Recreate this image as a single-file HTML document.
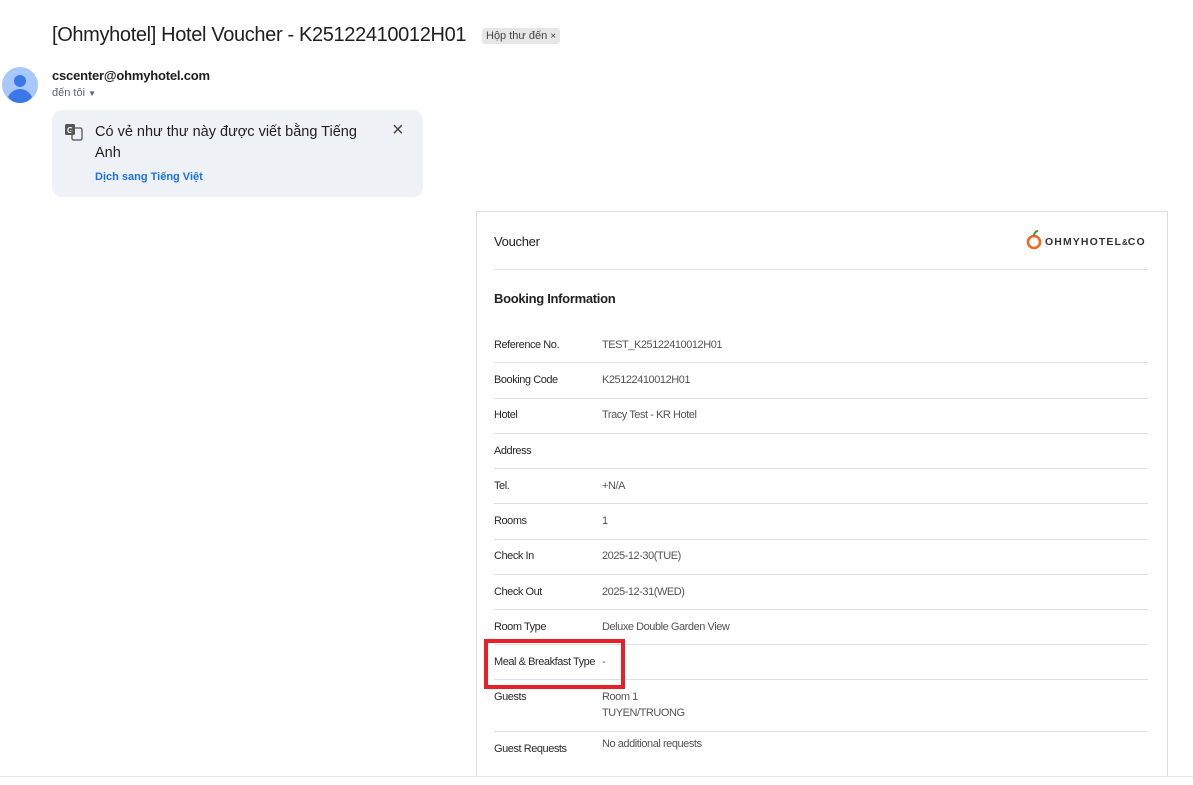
<!DOCTYPE html>
<html><head><meta charset="utf-8"><style>
*{margin:0;padding:0;box-sizing:border-box}
body{width:1193px;height:785px;background:#fff;font-family:"Liberation Sans",Arial,sans-serif;position:relative;overflow:hidden;color:#1f1f1f}
.a{position:absolute;white-space:nowrap}
.lbl{position:absolute;left:494px;font-size:11px;color:#2a2a2a;letter-spacing:-0.45px}
.val{position:absolute;left:602px;font-size:11px;color:#555;letter-spacing:-0.45px}
.ln{position:absolute;left:494px;width:654px;height:1px;background:#e0e0e0}
</style></head><body>
<div class="a" style="left:52px;top:24px;font-size:20px;letter-spacing:-0.35px;color:#1f1f1f">[Ohmyhotel] Hotel Voucher - K25122410012H01</div>
<div class="a" style="left:482px;top:28px;height:16px;padding:0 4px;background:#e6e6e6;border-radius:3px;font-size:11px;line-height:16px;color:#444">Hộp thư đến <span style="font-size:10px">×</span></div>
<svg class="a" style="left:2px;top:67px" width="36" height="36" viewBox="0 0 36 36"><circle cx="18" cy="18" r="18" fill="#a8c7fa"/><circle cx="18" cy="14" r="6" fill="#3b78e7"/><path d="M6 30c3-6 8-8 12-8s9 2 12 8c-3 4-7 6-12 6s-9-2-12-6z" fill="#3b78e7"/></svg>
<div class="a" style="left:52px;top:68px;font-size:13px;font-weight:bold;color:#1f1f1f;letter-spacing:-0.2px">cscenter@ohmyhotel.com</div>
<div class="a" style="left:52px;top:87px;font-size:11px;color:#5f6368">đến tôi <span style="font-size:8px">▼</span></div>
<div class="a" style="left:52px;top:110px;width:371px;height:87px;background:#eef1f6;border-radius:10px"></div>
<svg class="a" style="left:64px;top:123px" width="20" height="18" viewBox="0 0 20 18"><rect x="1" y="1" width="10" height="11" rx="1.5" fill="#555"/><text x="3" y="10" font-size="8" font-weight="bold" fill="#fff" font-family="Liberation Sans">G</text><rect x="8" y="5" width="10" height="12" rx="1.5" fill="none" stroke="#555" stroke-width="1.3"/></svg>
<div class="a" style="left:95px;top:122px;font-size:14.5px;line-height:21px;color:#1f1f1f;white-space:normal;width:280px">Có vẻ như thư này được viết bằng Tiếng Anh</div>
<div class="a" style="left:392px;top:119px;font-size:20px;color:#444">×</div>
<div class="a" style="left:95px;top:171px;font-size:11px;font-weight:bold;color:#1a73e8">Dịch sang Tiếng Việt</div>

<div class="a" style="left:476px;top:211px;width:692px;height:566px;border:1px solid #ddd;border-bottom:none"></div>
<div class="a" style="left:494px;top:234px;font-size:13px;color:#222;letter-spacing:-0.3px">Voucher</div>
<svg class="a" style="left:1026px;top:229px" width="16" height="22" viewBox="0 0 16 22"><circle cx="8" cy="13" r="6" fill="none" stroke="#f26522" stroke-width="2.6"/><path d="M8 7c0-3 2-5 4-5" stroke="#3a9a3a" stroke-width="2" fill="none"/></svg>
<div class="a" style="left:1045px;top:236px;font-size:10.5px;font-weight:bold;color:#333;letter-spacing:1.1px">OHMYHOTEL<span style="font-size:8px;letter-spacing:0">&amp;</span>CO</div>
<div class="ln" style="top:269px"></div>
<div class="a" style="left:494px;top:291px;font-size:13px;font-weight:bold;color:#222;letter-spacing:-0.3px">Booking Information</div>

<div class="lbl" style="top:339px">Reference No.</div><div class="val" style="top:339px">TEST_K25122410012H01</div>
<div class="ln" style="top:362px"></div>
<div class="lbl" style="top:374px">Booking Code</div><div class="val" style="top:374px">K25122410012H01</div>
<div class="ln" style="top:398px"></div>
<div class="lbl" style="top:409px">Hotel</div><div class="val" style="top:409px">Tracy Test - KR Hotel</div>
<div class="ln" style="top:433px"></div>
<div class="lbl" style="top:445px">Address</div>
<div class="ln" style="top:468px"></div>
<div class="lbl" style="top:480px">Tel.</div><div class="val" style="top:480px">+N/A</div>
<div class="ln" style="top:503px"></div>
<div class="lbl" style="top:515px">Rooms</div><div class="val" style="top:515px">1</div>
<div class="ln" style="top:539px"></div>
<div class="lbl" style="top:550px">Check In</div><div class="val" style="top:550px">2025-12-30(TUE)</div>
<div class="ln" style="top:574px"></div>
<div class="lbl" style="top:586px">Check Out</div><div class="val" style="top:586px">2025-12-31(WED)</div>
<div class="ln" style="top:609px"></div>
<div class="lbl" style="top:621px">Room Type</div><div class="val" style="top:621px">Deluxe Double Garden View</div>
<div class="ln" style="top:644px"></div>
<div class="lbl" style="top:656px">Meal &amp; Breakfast Type</div><div class="val" style="top:656px">-</div>
<div class="ln" style="top:679px"></div>
<div class="lbl" style="top:691px">Guests</div><div class="val" style="top:691px">Room 1</div><div class="val" style="top:707px">TUYEN/TRUONG</div>
<div class="ln" style="top:731px"></div>
<div class="lbl" style="top:743px">Guest Requests</div><div class="val" style="top:738px">No additional requests</div>
<div class="a" style="left:484px;top:639px;width:141px;height:50px;border:4px solid #e8202a"></div>
<div class="a" style="left:0;top:776px;width:1193px;height:9px;background:#fff;border-top:1px solid #e6e6e6"></div>
</body></html>
